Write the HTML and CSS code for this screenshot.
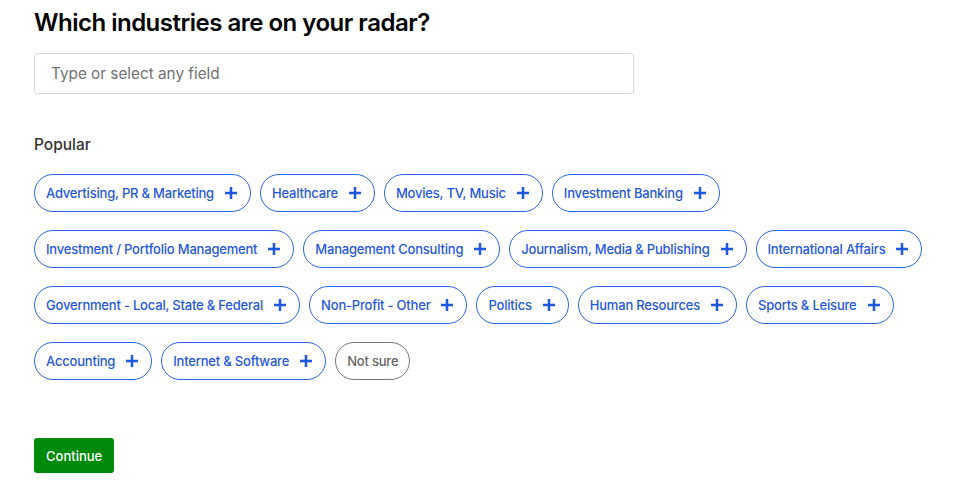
FILE: index.html
```html
<!DOCTYPE html>
<html lang="en">

<head>
    <meta charset="UTF-8">
    <meta name="viewport" content="width=device-width, initial-scale=1.0">
    <title>Industries</title>
    <link rel="stylesheet" href="styles.css">
</head>

<body>
    <div class="page">
        <h1>Which industries are on your radar?</h1>

        <input class="field" type="text" placeholder="Type or select any field">

        <h2>Popular</h2>

        <!-- chips -->
        <div class="chips">
            <button class="chip">Advertising, PR &amp; Marketing <svg class="plus" viewBox="0 0 12 12"><path d="M6 0v12M0 6h12"/></svg></button>
            <button class="chip">Healthcare <svg class="plus" viewBox="0 0 12 12"><path d="M6 0v12M0 6h12"/></svg></button>
            <button class="chip">Movies, TV, Music <svg class="plus" viewBox="0 0 12 12"><path d="M6 0v12M0 6h12"/></svg></button>
            <button class="chip">Investment Banking <svg class="plus" viewBox="0 0 12 12"><path d="M6 0v12M0 6h12"/></svg></button>
            <button class="chip">Investment / Portfolio Management <svg class="plus" viewBox="0 0 12 12"><path d="M6 0v12M0 6h12"/></svg></button>
            <button class="chip">Management Consulting <svg class="plus" viewBox="0 0 12 12"><path d="M6 0v12M0 6h12"/></svg></button>
            <button class="chip">Journalism, Media &amp; Publishing <svg class="plus" viewBox="0 0 12 12"><path d="M6 0v12M0 6h12"/></svg></button>
            <button class="chip">International Affairs <svg class="plus" viewBox="0 0 12 12"><path d="M6 0v12M0 6h12"/></svg></button>
            <button class="chip">Government - Local, State &amp; Federal <svg class="plus" viewBox="0 0 12 12"><path d="M6 0v12M0 6h12"/></svg></button>
            <button class="chip">Non-Profit - Other <svg class="plus" viewBox="0 0 12 12"><path d="M6 0v12M0 6h12"/></svg></button>
            <button class="chip">Politics <svg class="plus" viewBox="0 0 12 12"><path d="M6 0v12M0 6h12"/></svg></button>
            <button class="chip">Human Resources <svg class="plus" viewBox="0 0 12 12"><path d="M6 0v12M0 6h12"/></svg></button>
            <button class="chip">Sports &amp; Leisure <svg class="plus" viewBox="0 0 12 12"><path d="M6 0v12M0 6h12"/></svg></button>
            <button class="chip">Accounting <svg class="plus" viewBox="0 0 12 12"><path d="M6 0v12M0 6h12"/></svg></button>
            <button class="chip">Internet &amp; Software <svg class="plus" viewBox="0 0 12 12"><path d="M6 0v12M0 6h12"/></svg></button>
            <button class="chip chip-muted">Not sure</button>
        </div>

        <button class="continue">Continue</button>
    </div>
</body>

</html>
```

FILE: styles.css
```css
body {
    margin: 0;
    font-family: Inter, "Noto Sans", sans-serif;
    color: #222;
    background: #fff;
}

.page {
    padding: 7px 34px 0;
}

h1 {
    margin: 0;
    font-size: 24px;
    line-height: 32px;
    font-weight: 600;
    letter-spacing: -0.5px;
    color: #000;
}

.field {
    display: block;
    box-sizing: border-box;
    width: 600px;
    height: 41px;
    margin-top: 14px;
    padding: 0 16px;
    border: 1px solid #dcdcdc;
    border-radius: 3px;
    font-family: inherit;
    font-size: 15.3px;
    color: #222;
}

.field::placeholder {
    color: #717171;
}

h2 {
    margin: 41px 0 0;
    font-size: 15.5px;
    line-height: 20px;
    font-weight: 500;
    color: #333;
}

.chips {
    display: flex;
    flex-wrap: wrap;
    column-gap: 9px;
    row-gap: 18px;
    margin-top: 19px;
    max-width: 900px;
}

.chip {
    display: flex;
    align-items: center;
    gap: 11px;
    box-sizing: border-box;
    height: 38px;
    padding: 0 13px 0 11px;
    border: 1px solid #2a64e6;
    border-radius: 19px;
    background: #fff;
    font-family: inherit;
    font-size: 13px;
    font-weight: 500;
    letter-spacing: -0.2px;
    color: #1f58e0;
    cursor: pointer;
}

.plus {
    width: 12px;
    height: 12px;
    stroke: #1f58e0;
    stroke-width: 2.5;
    fill: none;
}

.chip-muted {
    border-color: #777;
    color: #666;
    padding: 0 11px;
}

.continue {
    display: block;
    margin-top: 58px;
    height: 35px;
    padding: 0 12px;
    border: none;
    border-radius: 3px;
    background: #008a0b;
    color: #fff;
    font-family: inherit;
    font-size: 13px;
    font-weight: 500;
    cursor: pointer;
}
```
